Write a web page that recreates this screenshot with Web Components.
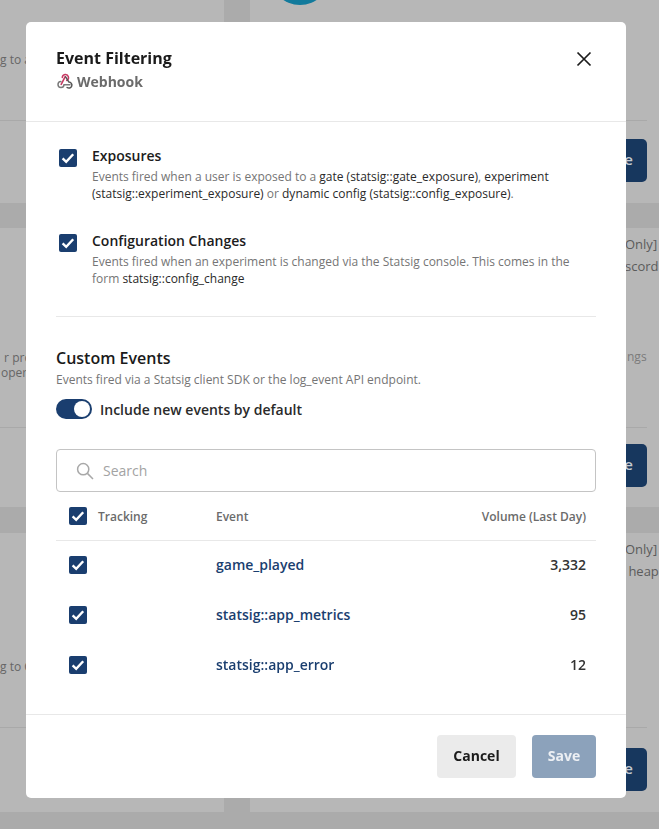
<!DOCTYPE html>
<html>
<head>
<meta charset="utf-8">
<style>
	html, body { margin: 0; height: 100%; overflow: hidden; }
	body { font-family: "Open Sans", sans-serif; background: #ababab; }
</style>
</head>
<body>
<bg-page></bg-page>
<event-modal></event-modal>

<script>
const check = `<svg viewBox="0 0 18 18" width="18" height="18"><path d="M3.6 9.4l3.6 3.5 7-7.6" fill="none" stroke="#fff" stroke-width="2.4"/></svg>`;

class BgCard extends HTMLElement {
	constructor() {
		super();
		const foot = this.getAttribute('foot');
		const gap = this.getAttribute('gap');
		this.attachShadow({mode: 'open'}).innerHTML = `
			<style>
			:host { display: flex; flex-direction: column; background: #b7b7b7; color: #666; font-size: 12px; height: 100%; overflow: hidden; }
			.body { flex: 1; white-space: nowrap; min-height: 0; }
			.line { height: 1px; background: #a9a9a9; }
			.foot { height: ${foot}px; }
			:host([side="right"]) .line { margin: 0 12px 0 20px; }
			:host([side="right"]) .foot { display: flex; justify-content: flex-end; align-items: flex-start; padding: ${gap}px 12px 0 0; box-sizing: border-box; }
			.btn { width: 90px; height: 43px; border-radius: 5px; background: #17375e; color: #c4cad2; font-weight: 600; font-size: 15px; line-height: 41px; text-align: right; padding-right: 14px; box-sizing: border-box; }
			</style>
			<div class="body"><slot></slot></div>
			<div class="line"></div>
			<div class="foot"></div>
		`;
		if (this.getAttribute('side') === 'right') {
			this.shadowRoot.querySelector('.foot').innerHTML = '<div class="btn">e</div>';
		}
	}
}
customElements.define('bg-card', BgCard);

class BgPage extends HTMLElement {
	constructor() {
		super();
		this.attachShadow({mode: 'open'}).innerHTML = `
			<style>
			:host { display: block; height: 829px; overflow: hidden; }
			.grid { display: grid; grid-template-columns: 224px 409px; grid-template-rows: 203px 279px 279px; column-gap: 26px; row-gap: 25px; }
			.grid > :nth-child(n+5) { margin-top: 1px; }
			p { margin: 0; white-space: pre; line-height: 15px; }
			.a { padding-top: 52px; }
			.m { padding: 122px 0 0 1px; }
			.b { padding-top: 126px; }
			.r { padding-left: 375px; font-size: 13px; color: #5b5b5b; line-height: 22px; padding-top: 5px; }
			.s { padding: 72px 0 0 377px; color: #7b7b7b; line-height: 16px; font-size: 12px; }
			.avatar { width: 60px; height: 60px; background: #127a9c; border-radius: 50%; margin: -55px 0 0 20px; }
			</style>
			<div class="grid">
				<bg-card foot="82"><p class="a">g to a</p></bg-card>
				<bg-card side="right" foot="82" gap="18"><div class="avatar"></div></bg-card>
				<bg-card foot="79"><p class="m"> r pro
oper</p></bg-card>
				<bg-card side="right" foot="79" gap="16"><p class="r">Only]
scord</p><p class="s">ngs</p></bg-card>
				<bg-card foot="84"><p class="b">g to C</p></bg-card>
				<bg-card side="right" foot="84" gap="20"><p class="r">Only]
 heap</p></bg-card>
			</div>
		`;
	}
}
customElements.define('bg-page', BgPage);

class CheckBox extends HTMLElement {
	constructor() {
		super();
		this.attachShadow({mode: 'open'}).innerHTML = `
			<style>
			:host { display: inline-flex; align-items: center; justify-content: center; width: 18px; height: 18px; background: #1a3e6f; border-radius: 2px; flex: none; }
			svg { display: block; }
			</style>
			${check}
		`;
	}
}
customElements.define('check-box', CheckBox);

class EventOption extends HTMLElement {
	constructor() {
		super();
		this.attachShadow({mode: 'open'}).innerHTML = `
			<style>
			:host { display: flex; gap: 15px; }
			.title { font-size: 14px; font-weight: 600; line-height: 19px; color: #1c1c1c; margin-bottom: 4px; }
			.desc { font-size: 12px; line-height: 16.5px; color: #757575; white-space: nowrap; }
			check-box { margin: 3px 0 0 3px; }
			</style>
			<check-box></check-box>
			<div>
				<div class="title">${this.getAttribute('label')}</div>
				<div class="desc"><slot></slot></div>
			</div>
		`;
	}
}
customElements.define('event-option', EventOption);

class CodeText extends HTMLElement {
	constructor() {
		super();
		this.attachShadow({mode: 'open'}).innerHTML = `<style>:host { color: #2a2a2a; }</style><slot></slot>`;
	}
}
customElements.define('code-text', CodeText);

class EventRow extends HTMLElement {
	constructor() {
		super();
		this.attachShadow({mode: 'open'}).innerHTML = `
			<style>
			:host { display: grid; grid-template-columns: 147px 1fr auto; align-items: center; box-sizing: border-box; height: 50px; padding: 0 10px 2px 13px; font-size: 14px; font-weight: 600; }
			span { margin-bottom: 2px; }
			.name { color: #1a3e6f; }
			.vol { color: #333; }
			</style>
			<check-box></check-box>
			<span class="name">${this.getAttribute('name')}</span>
			<span class="vol">${this.getAttribute('volume')}</span>
		`;
	}
}
customElements.define('event-row', EventRow);

class EventModal extends HTMLElement {
	constructor() {
		super();
		this.attachShadow({mode: 'open'}).innerHTML = `
			<style>
			:host { display: flex; flex-direction: column; position: fixed; left: 26px; top: 22px; width: 600px; height: 776px; background: #fff; border-radius: 5px; color: #1c1c1c; }
			header { height: 100px; box-sizing: border-box; padding: 25px 30px 0; border-bottom: 1px solid #e8e8e8; position: relative; }
			h1 { margin: 0; font-size: 16px; font-weight: 700; line-height: 22px; color: #1a1a1a; }
			.sub { display: flex; align-items: center; gap: 3px; font-size: 14px; font-weight: 700; color: #6b6b6b; line-height: 20px; margin-top: 3px; }
			.sub svg { margin-top: -3px; }
			.close { position: absolute; right: 33px; top: 28px; width: 18px; height: 18px; }
			main { flex: 1; padding: 24px 30px 0; }
			.options { display: flex; flex-direction: column; gap: 29px; }
			hr { border: 0; border-top: 1px solid #e8e8e8; margin: 29px 0 30px; }
			h2 { margin: 0; font-size: 16px; font-weight: 600; line-height: 22px; color: #1a1a1a; }
			.note { font-size: 12px; line-height: 16px; color: #757575; margin-top: 3px; }
			.toggle-row { display: flex; align-items: center; gap: 8px; font-size: 14px; font-weight: 600; color: #2a2a2a; margin-top: 11px; height: 20px; }
			.toggle { width: 36px; height: 20px; border-radius: 10px; background: #1a3e6f; position: relative; flex: none; }
			.toggle i { position: absolute; right: 2px; top: 2px; width: 16px; height: 16px; border-radius: 50%; background: #fff; }
			.search { display: flex; align-items: center; gap: 9px; height: 43px; margin-top: 30px; box-sizing: border-box; border: 1px solid #c4c4c4; border-radius: 4px; padding-left: 19px; color: #a3a3a3; font-size: 14px; }
			.head { display: grid; grid-template-columns: 147px 1fr auto; align-items: center; height: 49px; box-sizing: border-box; padding: 0 10px 0 13px; border-bottom: 1px solid #e8e8e8; font-size: 12px; font-weight: 600; color: #6b6b6b; }
			.track { display: flex; align-items: center; gap: 11px; }
			footer { height: 84px; box-sizing: border-box; border-top: 1px solid #e8e8e8; display: flex; justify-content: flex-end; gap: 16px; padding: 20px 30px 0; }
			button { font: 700 14px "Open Sans", sans-serif; height: 43px; border: 0; border-radius: 4px; padding: 0 0 2px; }
			.cancel { width: 79px; background: #ebebeb; color: #1c1c1c; }
			.save { width: 64px; background: #8ca2bb; color: #edf0f4; }
			</style>
			<header>
				<h1>Event Filtering</h1>
				<div class="sub">
					<svg width="18" height="18" viewBox="0 0 18 18" fill="none" stroke-width="1.5" stroke-linecap="round">
						<path d="M6.3 5.4a3.1 3.1 0 1 1 4.4 2.9" stroke="#c73a63" transform="translate(0 .2)"/>
						<path d="M9.2 4.6 5.2 12.4" stroke="#c73a63" stroke-width="1.6"/>
						<path d="M4.9 9.6a3 3 0 1 0 3.1 3.2h6" stroke="#7a7a7a"/>
						<path d="M9.6 4.9l3.3 5.2a3 3 0 1 1 -1.8 5.4" stroke="#565656"/>
					</svg>
					<span>Webhook</span>
				</div>
				<svg class="close" viewBox="0 0 18 18"><path d="M2.5 2.5l13 13M15.5 2.5l-13 13" stroke="#1c1c1c" stroke-width="1.7" fill="none"/></svg>
			</header>
			<main>
				<div class="options">
					<event-option label="Exposures">
						<div>Events fired when a user is exposed to a <code-text>gate (statsig::gate_exposure)</code-text>, <code-text>experiment</code-text></div>
						<div><code-text>(statsig::experiment_exposure)</code-text> or <code-text>dynamic config (statsig::config_exposure)</code-text>.</div>
					</event-option>
					<event-option label="Configuration Changes">
						<div>Events fired when an experiment is changed via the Statsig console. This comes in the</div>
						<div>form <code-text>statsig::config_change</code-text></div>
					</event-option>
				</div>
				<hr>
				<h2>Custom Events</h2>
				<div class="note">Events fired via a Statsig client SDK or the log_event API endpoint.</div>
				<div class="toggle-row"><span class="toggle"><i></i></span><span>Include new events by default</span></div>
				<div class="search">
					<svg width="18" height="18" viewBox="0 0 18 18" fill="none" stroke="#a8a8a8" stroke-width="1.5"><circle cx="7.2" cy="7.2" r="5.6"/><path d="M11.4 11.4l5.6 5.6"/></svg>
					<span>Search</span>
				</div>
				<div class="head">
					<span class="track"><check-box></check-box><span>Tracking</span></span>
					<span>Event</span>
					<span>Volume (Last Day)</span>
				</div>
				<event-row name="game_played" volume="3,332"></event-row>
				<event-row name="statsig::app_metrics" volume="95"></event-row>
				<event-row name="statsig::app_error" volume="12"></event-row>
			</main>
			<footer>
				<button class="cancel">Cancel</button>
				<button class="save">Save</button>
			</footer>
		`;
	}
}
customElements.define('event-modal', EventModal);
</script>
</body>
</html>
